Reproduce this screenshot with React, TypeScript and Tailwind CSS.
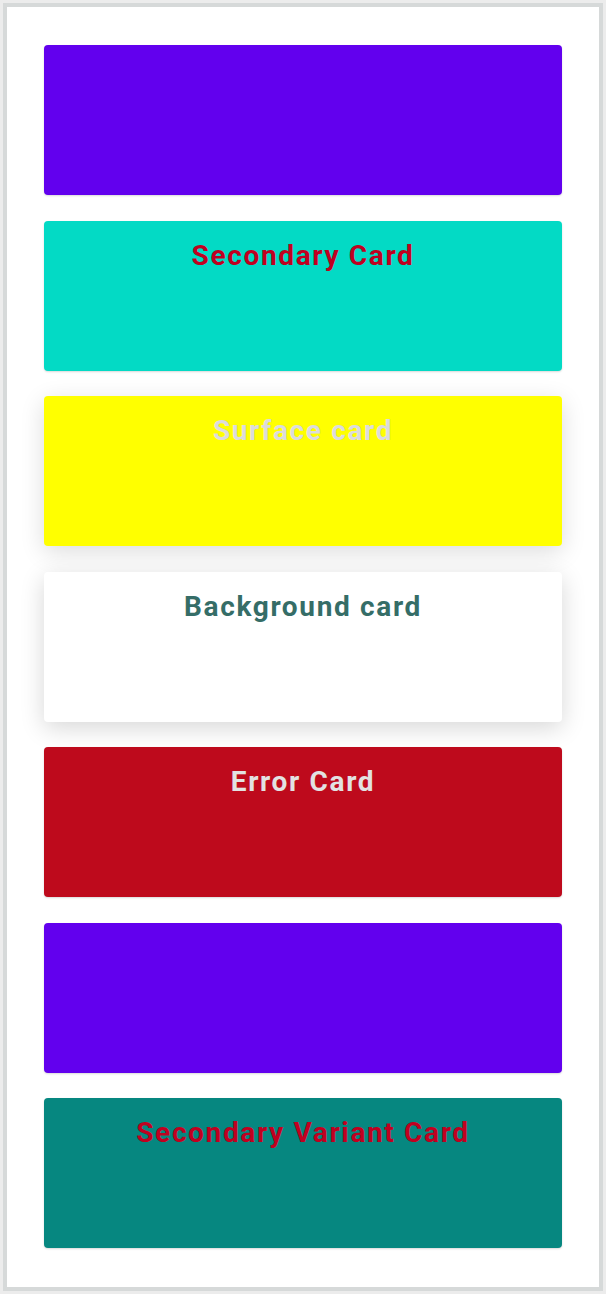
export default function App() {
  const cards = [
    { label: "Primary Card", bg: "bg-[#6200ee]", text: "text-[#6200ee]", shadow: "shadow-[0_1px_2px_rgba(0,0,0,0.15)]" },
    { label: "Secondary Card", bg: "bg-[#03dac5]", text: "text-[#c00020]", shadow: "shadow-[0_1px_2px_rgba(0,0,0,0.15)]" },
    { label: "Surface card", bg: "bg-[#ffff00]", text: "text-[#dcdcdc]", shadow: "shadow-[0_6px_24px_rgba(0,0,0,0.14)]" },
    { label: "Background card", bg: "bg-white", text: "text-[#356d67]", shadow: "shadow-[0_6px_24px_rgba(0,0,0,0.16)]" },
    { label: "Error Card", bg: "bg-[#be0a1c]", text: "text-[#e2e2e2]", shadow: "shadow-[0_1px_2px_rgba(0,0,0,0.15)]" },
    { label: "Primary Variant Card", bg: "bg-[#6200ee]", text: "text-[#6200ee]", shadow: "shadow-[0_1px_2px_rgba(0,0,0,0.15)]" },
    { label: "Secondary Variant Card", bg: "bg-[#068780]", text: "text-[#c00020]", shadow: "shadow-[0_1px_2px_rgba(0,0,0,0.15)]" },
  ];

  return (
    <div className="min-h-[1294px] w-[606px] bg-[#ececec] p-[3px] font-['Roboto',sans-serif]">
      <div className="h-[1288px] border-[4px] border-[#d6d9d9] bg-white px-[37px] pt-[38px]">
        <div className="flex flex-col gap-[25.5px]">
          {cards.map((c) => (
            <div
              key={c.label}
              className={`h-[150px] rounded-[4px] ${c.bg} ${c.shadow} pt-[14px] text-center`}
            >
              <span className={`text-[28px] font-bold tracking-[1.65px] ${c.text}`}>
                {c.label}
              </span>
            </div>
          ))}
        </div>
      </div>
    </div>
  );
}
